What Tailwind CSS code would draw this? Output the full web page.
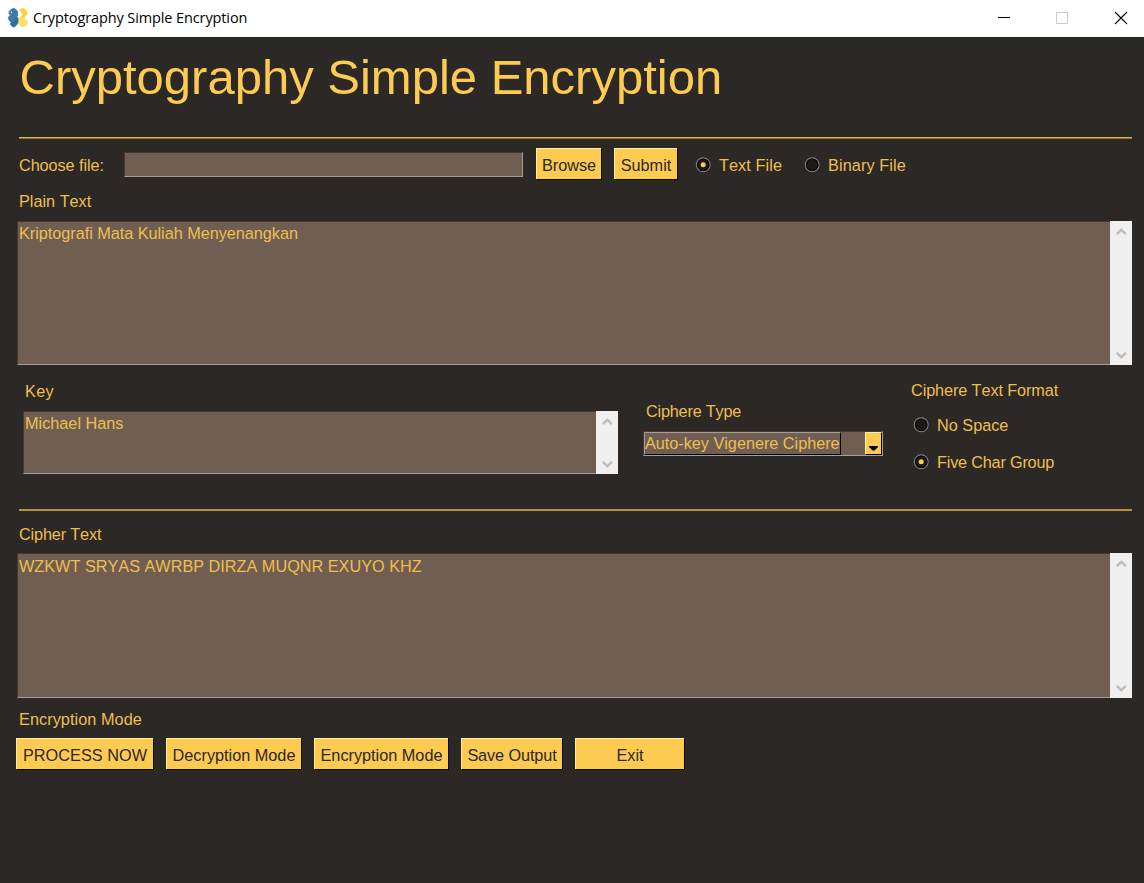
<!DOCTYPE html>
<html lang="en">
<head>
<meta charset="utf-8">
<title>Cryptography Simple Encryption</title>
<script src="https://cdn.jsdelivr.net/npm/@tailwindcss/browser@4"></script>
</head>
<body class="w-[1144px] h-[883px] overflow-hidden bg-[#2c2825] text-[#eebf4e]">
<svg class="hidden">
  <symbol id="up" viewBox="0 0 22 20"><path d="M6.8 13.2 11.3 8.8 15.8 13.2" fill="none" stroke="#bfbfbf" stroke-width="2.4"/></symbol>
  <symbol id="down" viewBox="0 0 22 20"><path d="M6.8 7.8 11.3 12.2 15.8 7.8" fill="none" stroke="#bfbfbf" stroke-width="2.4"/></symbol>
  <symbol id="radio" viewBox="0 0 16 16"><circle cx="8.2" cy="7.8" r="6.9" fill="#1c1a18" stroke="#85817f" stroke-width="1.1"/><circle cx="8.2" cy="7.8" r="5.7" fill="none" stroke="#0c0b0a" stroke-width="1.2"/></symbol>
</svg>
<div class="flex flex-col w-full h-full font-['Liberation_Sans',Arial,sans-serif] text-[16.25px] leading-5 whitespace-nowrap [font-kerning:none] [font-variant-ligatures:none]">
  <header class="flex items-center h-[37px] shrink-0 bg-white text-black pl-2 font-['Open_Sans','Noto_Sans',sans-serif]">
    <svg class="w-5 h-5 -mt-[2px]" viewBox="0 0 20 20">
      <path d="M4.5 0.4H6.5L9.6 3.2V8L6.6 10.6 4.8 13 4.4 14.8 1 12.4 .4 9 3.6 6.2H1L1.2 3.2Z" fill="#3d7aab" stroke="#3d7aab" stroke-width=".8" stroke-linejoin="round"/>
      <path d="M5.2 13.6 6.4 10.8 9 8.8 10.2 11V15L6.8 18.8H4.6L2.4 16.4 2.8 14.8Z" fill="#336d9e" stroke="#336d9e" stroke-width=".8" stroke-linejoin="round"/>
      <path d="M11.6 2.2 13.6 .6H16L18.8 3.4V6.2L15.6 9.4 12 11.6 11 10.4 14.2 7.6 14.4 4.6Z" fill="#ffd23c" stroke="#ffd23c" stroke-width=".8" stroke-linejoin="round"/>
      <path d="M11.2 12.2 14.8 9.8 17.2 9.2 16.8 12.6H19.4L19.2 16 15.8 18.8H13.6L10.8 16Z" fill="#ffe062" stroke="#ffe062" stroke-width=".8" stroke-linejoin="round"/>
      <circle cx="3.6" cy="4.2" r=".7" fill="#fff"/><circle cx="15.9" cy="15.6" r=".7" fill="#fff"/>
    </svg>
    <span class="ml-[5px] -mt-[2px] text-[14.5px] tracking-[-0.11px]">Cryptography Simple Encryption</span>
    <svg class="ml-auto w-[160px] h-[37px]" viewBox="0 0 160 37" fill="none">
      <path d="M14 17.5H26" stroke="#000"/><rect x="72.5" y="12.5" width="11" height="11" stroke="#ccc"/><path d="M131 12 143 24M143 12 131 24" stroke="#000" stroke-width="1.1"/>
    </svg>
  </header>
  <main class="flex flex-col">
    <h1 class="h-[100px] pl-[19.5px] pt-[12px] text-[49px] leading-[56px] text-[#fdcb52]">Cryptography Simple Encryption</h1>
    <div class="ml-[19px] w-[1113px] h-[2px] bg-[#8b7135] border-t border-[#e2b54b]"></div>
    <section class="flex items-center h-[51px]">
      <span class="ml-[19px] w-[105px] tracking-[-0.08px]">Choose file:</span>
      <div class="w-[399px] h-[25px] bg-[#705e52] border-t border-l border-t-[#433832] border-l-[#433832] border-b-[#a79d96] border-b border-r border-r-[#a79d96]"></div>
      <div class="ml-[13px] -mt-[2px] w-[65px] h-[31px] bg-[#fdcb52] text-[#2c2825] border-t border-l border-[#fff09a] shadow-[1px_1px_0_#0c0a08] flex items-center justify-center pt-[2px]">Browse</div>
      <div class="ml-[13px] -mt-[2px] w-[63px] h-[31px] bg-[#fdcb52] text-[#2c2825] border-t border-l border-[#fff09a] shadow-[1px_1px_0_#0c0a08] flex items-center justify-center pt-[2px]">Submit</div>
      <svg class="ml-[18px] w-4 h-4" viewBox="0 0 16 16"><use href="#radio"/><circle cx="8.2" cy="7.8" r="2.5" fill="#fdcb52"/></svg>
      <span class="ml-2 w-[85px] tracking-[0.08px]">Text File</span>
      <svg class="w-4 h-4" viewBox="0 0 16 16"><use href="#radio"/></svg>
      <span class="ml-2 tracking-[0.1px]">Binary File</span>
    </section>
    <div class="h-[31px] pl-[19px] pt-px">Plain Text</div>
    <section class="ml-[17px] mb-px flex w-[1115px] h-[144px]">
      <div class="grow bg-[#705e52] border-t border-l border-t-[#433832] border-l-[#433832] border-b border-b-[#a79d96] pl-px pt-px tracking-[-0.03px]">Kriptografi Mata Kuliah Menyenangkan</div>
      <div class="w-[22px] bg-[#f0f0f0] flex flex-col justify-between"><svg class="w-[22px] h-5"><use href="#up"/></svg><svg class="w-[22px] h-5"><use href="#down"/></svg></div>
    </section>
    <section class="flex h-[143px]">
      <div class="ml-[23px] w-[595px] pt-[15px]">
        <div class="h-[30px] pl-[2px] tracking-[0.3px]">Key</div>
        <div class="flex h-[63px]">
          <div class="grow bg-[#705e52] border-t border-l border-t-[#433832] border-l-[#433832] border-b border-b-[#a79d96] pl-px pt-px">Michael Hans</div>
          <div class="w-[22px] bg-[#f0f0f0] flex flex-col justify-between"><svg class="w-[22px] h-5"><use href="#up"/></svg><svg class="w-[22px] h-5"><use href="#down"/></svg></div>
        </div>
      </div>
      <div class="ml-[25px] w-[241px] pt-[35px]">
        <div class="h-[30px] pl-[3px] tracking-[-0.2px]">Ciphere Type</div>
        <div class="flex w-[240px] h-[25px] bg-[#705e52] border border-t-[#433832] border-l-[#433832] border-b-[#a79d96] border-r-[#a79d96]">
          <div class="w-[197px] h-[23px] border border-t-[#a79d96] border-l-[#a79d96] border-r-black border-b-black leading-[21px] tracking-[-0.02px]">Auto-key Vigenere Ciphere</div>
          <div class="ml-auto w-[17px] h-[23px] bg-[#fdcb52] border-t border-l border-t-[#fff09a] border-l-[#fff09a] border-r border-b border-r-black border-b-black flex items-end justify-center pb-[3px]"><svg class="w-[9px] h-[6px]" viewBox="0 0 9 6"><path d="M0 1H9V2L5.5 5.5H3.5L0 2Z" fill="#000"/></svg></div>
        </div>
      </div>
      <div class="ml-[27px] pt-[14px]">
        <div class="h-[35px] tracking-[-0.1px]">Ciphere Text Format</div>
        <div class="h-[37px] flex items-start gap-2 pl-[2px]"><svg class="w-4 h-4 mt-[2px]" viewBox="0 0 16 16"><use href="#radio"/></svg><span>No Space</span></div>
        <div class="flex items-start gap-2 pl-[2px]"><svg class="w-4 h-4 mt-[2px]" viewBox="0 0 16 16"><use href="#radio"/><circle cx="8.2" cy="7.8" r="2.5" fill="#fdcb52"/></svg><span class="tracking-[-0.2px]">Five Char Group</span></div>
      </div>
    </section>
    <div class="ml-[19px] w-[1113px] h-[2px] bg-[#b69040]"></div>
    <div class="h-[42px] pl-[19px] pt-[13px] tracking-[-0.15px]">Cipher Text</div>
    <section class="ml-[17px] flex w-[1115px] h-[145px]">
      <div class="grow bg-[#705e52] border-t border-l border-t-[#433832] border-l-[#433832] border-b border-b-[#a79d96] pl-px pt-[2px]">WZKWT SRYAS AWRBP DIRZA MUQNR EXUYO KHZ</div>
      <div class="w-[22px] bg-[#f0f0f0] flex flex-col justify-between"><svg class="w-[22px] h-5"><use href="#up"/></svg><svg class="w-[22px] h-5"><use href="#down"/></svg></div>
    </section>
    <div class="h-[39px] pl-[19px] pt-[11px] tracking-[0.06px]">Encryption Mode</div>
    <section class="flex pl-4 pt-px text-[#2c2825] *:h-[31px] *:bg-[#fdcb52] *:border-t *:border-l *:border-[#fff09a] *:shadow-[1px_1px_0_#0c0a08] *:flex *:items-center *:justify-center *:pt-[2px]">
      <div class="w-[137px] tracking-[0.05px]">PROCESS NOW</div>
      <div class="ml-[13px] w-[135px]">Decryption Mode</div>
      <div class="ml-[13px] w-[134px]">Encryption Mode</div>
      <div class="ml-[13px] w-[101px] tracking-[-0.1px]">Save Output</div>
      <div class="ml-[13px] w-[109px]">Exit</div>
    </section>
  </main>
</div>
</body>
</html>
